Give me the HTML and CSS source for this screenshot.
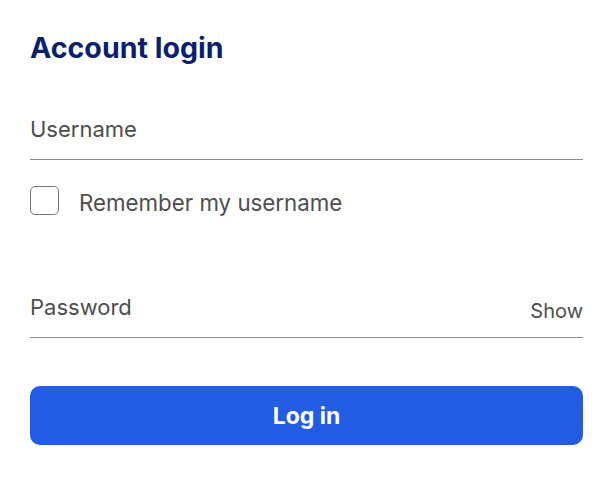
FILE: index.html
```html
<!DOCTYPE html>
<html lang="en">
<head>
    <meta charset="UTF-8">
    <meta name="viewport" content="width=device-width, initial-scale=1.0">
    <title>Account login</title>
    <link rel="stylesheet" href="styles.css">
</head>
<body>
    <div class="login">
        <h2>Account login</h2>

        <div class="field">
            <label for="username">Username</label>
            <input type="text" id="username">
        </div>

        <label class="remember">
            <span class="check"></span>
            <span>Remember my username</span>
        </label>

        <div class="field password-field">
            <label for="password">Password</label>
            <input type="password" id="password">
            <span class="show">Show</span>
        </div>

        <button class="login-btn">Log in</button>
    </div>
</body>
</html>
```

FILE: styles.css
```css
body {
    margin: 0;
    font-family: Inter, "Noto Sans", sans-serif;
    background: #fff;
    color: #4a4a4a;
}
.login {
    padding: 28px 30px 0 30px;
    display: flex;
    flex-direction: column;
}
h2 {
    margin: 0;
    font-size: 28.6px;
    line-height: 40px;
    font-weight: 700;
    color: #0b1f6f;
}
.field {
    display: flex;
    align-items: flex-end;
    border-bottom: 1px solid #888;
    height: 52px;
    margin-top: 39px;
    position: relative;
}
.field label {
    font-size: 22px;
    line-height: 26px;
    padding-bottom: 17px;
    color: #4e4e4e;
}
.field input {
    position: absolute;
    inset: 0;
    border: none;
    background: transparent;
    outline: none;
}
.remember {
    display: flex;
    align-items: center;
    gap: 20px;
    margin-top: 24px;
    font-size: 22.3px;
    line-height: 28px;
    color: #4e4e4e;
}
.remember span:last-child {
    padding-top: 5px;
}
.check {
    width: 27px;
    height: 27px;
    border: 1px solid #777;
    border-radius: 5px;
}
.password-field {
    margin-top: 68px;
    justify-content: space-between;
}
.show {
    font-size: 20px;
    padding-bottom: 14px;
    color: #4e4e4e;
}
.login-btn {
    margin-top: 48px;
    height: 59px;
    border: none;
    border-radius: 10px;
    background: #225ce3;
    color: #fff;
    font-family: inherit;
    font-size: 23px;
    font-weight: 700;
}
```
